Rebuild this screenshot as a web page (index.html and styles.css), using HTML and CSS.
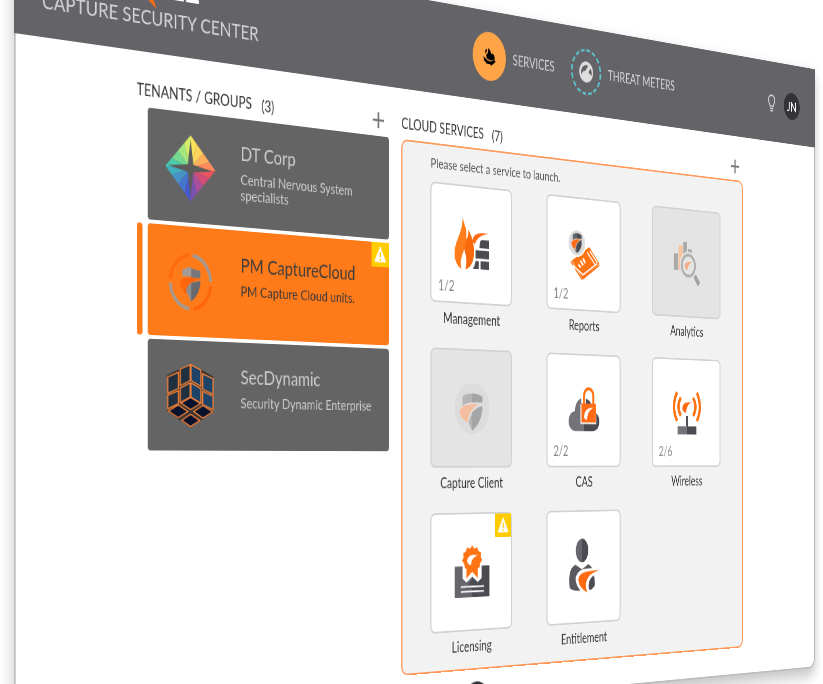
FILE: index.html
```html
<!DOCTYPE html>
<html lang="en">
<head>
<meta charset="utf-8">
<title>Capture Security Center</title>
<link rel="stylesheet" href="styles.css">
</head>
<body>
<svg class="defs" aria-hidden="true">
  <defs>
    <symbol id="warn" viewBox="0 0 28 28">
      <path d="M14 5L23 22H5Z" fill="#fff" stroke="#fff" stroke-linejoin="round"/>
      <path d="M14 11v6M14 19v2" stroke="#fc0" stroke-width="2"/>
    </symbol>
    <symbol id="plus" viewBox="0 0 22 22">
      <path d="M11 1v20M1 11h20" stroke="#777" stroke-width="3"/>
    </symbol>
  </defs>
</svg>
<div class="stage">
  <div class="board">
    <header class="top">
      <div class="brand">
        <div class="wordmark">SONICWALL
          <svg class="swoosh" viewBox="0 0 40 50"><path d="M0 0C20 6 30 28 40 50C26 42 10 24 0 0Z" fill="#ff6a13"/></svg>
        </div>
        <div class="product">CAPTURE SECURITY CENTER</div>
      </div>
      <div class="tools">
        <nav class="nav">
          <a class="nav-item" href="#services">
            <span class="orb orb-on">
              <svg class="orb-icon" viewBox="0 0 32 32"><path d="M14 4C17 6 19 9 20 12C24 10 28 14 27 19C24 22 17 22 10 19L9 14L12 12Z"/><path d="M9 5L11 8L7 13L6 11Z"/><path d="M3 17L12 22L18 23L28 20L29 23L20 29L16 27L10 27L4 22Z"/></svg>
            </span>
            SERVICES
          </a>
          <a class="nav-item" href="#meters">
            <span class="orb">
              <svg class="orb-ring" viewBox="0 0 60 60"><circle cx="30" cy="30" r="28" fill="none" stroke="#5cc4cc" stroke-width="3" stroke-dasharray="7 4"/></svg>
              <svg class="orb-icon orb-gauge" viewBox="0 0 32 32"><circle cx="16" cy="16" r="13" fill="#dedede"/><path d="M6 17C7 10 13 6 20 8L14 15C10 15 8 17 8 20ZM24 11C27 14 27 17 26 20L20 16Z" fill="#646368"/><path d="M24 8L13 19" stroke="#dedede" stroke-width="3"/></svg>
            </span>
            THREAT METERS
          </a>
        </nav>
        <div class="account">
          <button class="bare" type="button" aria-label="Tips">
            <svg class="bulb" viewBox="0 0 20 26"><path d="M6 17C5 13 2 12 2 8.500A8 7.500 0 0 1 18 8.500C18 12 15 13 14 17Z" fill="none" stroke="#ddd" stroke-width="2"/><path d="M6 20.500h8M7 24h6" stroke="#ddd" stroke-width="2"/></svg>
          </button>
          <button class="avatar" type="button">JN</button>
        </div>
      </div>
    </header>

    <main class="content">
      <section class="tenants">
        <div class="heading heading-out">
          <h2>TENANTS / GROUPS</h2><span class="total">(3)</span>
          <button class="bare add" type="button" aria-label="Add tenant"><svg class="plus"><use href="#plus"/></svg></button>
        </div>
        <ul class="tenant-list">
          <li>
            <button class="tenant" type="button">
              <svg class="tenant-logo" viewBox="0 0 72 72">
                <g>
                  <path fill="#f8e45a" d="M36 36V0L45 9Z"/><path fill="#ffd45c" d="M36 36L45 9L54 18Z"/><path fill="#ffb05c" d="M36 36L54 18L63 27Z"/><path fill="#ff8a5c" d="M36 36L63 27L72 36Z"/>
                  <path fill="#ea5560" d="M36 36H72L63 45Z"/><path fill="#d24c74" d="M36 36L63 45L54 54Z"/><path fill="#a8509c" d="M36 36L54 54L45 63Z"/><path fill="#7a50b0" d="M36 36L45 63L36 72Z"/>
                  <path fill="#4858cc" d="M36 36V72L27 63Z"/><path fill="#4474cc" d="M36 36L27 63L18 54Z"/><path fill="#4692c4" d="M36 36L18 54L9 45Z"/><path fill="#40aebc" d="M36 36L9 45L0 36Z"/>
                  <path fill="#4cc8ac" d="M36 36H0L9 27Z"/><path fill="#74d890" d="M36 36L9 27L18 18Z"/><path fill="#a4e680" d="M36 36L18 18L27 9Z"/><path fill="#d4ee68" d="M36 36L27 9L36 0Z"/>
                </g>
                <path fill="#5c5c5a" d="M36 4L40 32L68 37L40 40L36 68L32 40L4 35L32 32Z"/>
              </svg>
              <span class="tenant-text"><span class="tenant-name">DT Corp</span><span class="tenant-note">Central Nervous System specialists</span></span>
            </button>
          </li>
          <li class="current">
            <button class="tenant tenant-on" type="button" aria-current="true">
              <svg class="tenant-logo" viewBox="0 0 72 72">
                <g fill="none" stroke-width="4">
                  <path d="M39 7A29 29 0 0 1 65 34" stroke="#a39a94"/><path d="M65 39A29 29 0 0 1 40 65" stroke="#ff6408"/><path d="M34 65A29 29 0 0 1 7 38" stroke="#a39a94"/><path d="M7 33A29 29 0 0 1 34 7" stroke="#ff6a0c"/>
                </g>
                <path d="M24 23Q36 18 37 20V30H24Z" fill="#a49a98"/><path d="M37 20Q40 22 50 23V31H37Z" fill="#77777c"/>
                <path d="M21 35C30 28 44 31 50 32C38 34 31 40 30 50C24 46 21 40 21 35Z" fill="#ff650c"/>
                <path d="M30 47C30 40 34 36 50 34C50 42 46 50 37 57Z" fill="#8f8e91"/><path d="M37 37L50 34C50 43 46 51 37 57Z" fill="#68686e"/>
              </svg>
              <span class="tenant-text"><span class="tenant-name">PM CaptureCloud</span><span class="tenant-note">PM Capture Cloud units.</span></span>
              <svg class="flag"><use href="#warn"/></svg>
            </button>
          </li>
          <li>
            <button class="tenant" type="button">
              <svg class="tenant-logo" viewBox="110 420 146 208" preserveAspectRatio="none">
                <path d="M183 422L215 440L250 460V573L183 624L115 573V460L151 440Z" fill="#3a3430"/>
                <g stroke="#f0803a" stroke-width="4" stroke-linejoin="round">
                  <g fill="#20303e"><path d="M117 466L148 450V501L117 517Z"/><path d="M153 440L182 425V475L153 492Z"/><path d="M117 523L148 508V549L117 566Z"/><path d="M153 500L182 482V527L153 546Z"/></g>
                  <g fill="#1d4468"><path d="M184 425L213 441V492L184 475Z"/><path d="M218 452L249 467V517L218 501Z"/><path d="M184 482L213 500V546L184 527Z"/><path d="M218 508L249 523V566L218 550Z"/></g>
                  <g fill="#08122c"><path d="M183 528L212 547L183 567L155 547Z"/><path d="M147 553L175 573L147 593L119 573Z"/><path d="M219 553L248 573L219 593L192 573Z"/><path d="M183 581L210 601L183 621L157 601Z"/></g>
                </g>
              </svg>
              <span class="tenant-text"><span class="tenant-name">SecDynamic</span><span class="tenant-note">Security Dynamic Enterprise</span></span>
            </button>
          </li>
        </ul>
      </section>

      <section class="services" id="services">
        <div class="heading">
          <h2>CLOUD SERVICES</h2><span class="total">(7)</span>
          <button class="bare add" type="button" aria-label="Add service"><svg class="plus"><use href="#plus"/></svg></button>
        </div>
        <div class="panel">
          <p class="hint">Please select a service to launch.</p>
          <ul class="grid">
            <li class="service">
              <button class="tile" type="button" aria-labelledby="s1">
                <svg class="icon" viewBox="0 0 64 64">
                  <path d="M15 0C19 10 24 15 21 26C25 24 26 18 25 14C32 22 36 32 35 42C35 52 29 60 20 62C23 54 22 46 18 38C14 46 10 52 13 62C4 59 0 50 1 42C2 28 15 18 15 0Z" fill="#ff7d1a"/>
                  <path d="M25 14C32 22 36 32 35 42C35 52 29 60 20 62C23 54 22 46 18 38C20 32 22 28 21 26C25 24 26 18 25 14Z" fill="#f96a0c"/>
                  <path d="M32 27C34 18 44 15 62 17C50 18 40 22 37 31Z" fill="#ff6a13"/>
                  <g fill="#4c4b52"><path d="M48 25H62V35H45Q45 28 48 25Z"/><rect x="38" y="38" width="24" height="10"/><path d="M38 51H44V61H33Q37 57 38 51Z"/><rect x="47" y="51" width="15" height="10"/></g>
                </svg>
                <span class="count">1/2</span>
              </button>
              <span class="label" id="s1">Management</span>
            </li>
            <li class="service">
              <button class="tile" type="button" aria-labelledby="s2">
                <svg class="icon" viewBox="0 0 64 64">
                  <path d="M8 41L42 22L62 42L29 63Z" fill="#ff7312"/><path d="M6 42L28 64L62 44" fill="none" stroke="#f96a0c" stroke-width="2"/>
                  <path d="M10 47L30 58L58 42" fill="none" stroke="#fff" stroke-width="2"/><path d="M38 29L54 44M43 27L58 41" stroke="#fff" stroke-width="2"/>
                  <path d="M21 45L25 49M25 40L30 46M30 37L34 43" stroke="#fff" stroke-width="3"/>
                  <circle cx="18" cy="18" r="17" fill="#dcdcdc" stroke="#fff" stroke-width="2"/>
                  <path d="M10 8Q18 3 27 8V20Q25 27 18 31Q12 27 10 20Z" fill="#65656c"/><path d="M18 6Q22 6 27 8V20Q25 27 18 31Z" fill="#4c4b52"/>
                  <path d="M7 18C12 12 20 13 27 13C20 16 15 20 15 27C10 25 7 22 7 18Z" fill="#ff6a13" stroke="#dcdcdc"/>
                </svg>
                <span class="count">1/2</span>
              </button>
              <span class="label" id="s2">Reports</span>
            </li>
            <li class="service">
              <button class="tile tile-off" type="button" aria-labelledby="s3">
                <svg class="icon" viewBox="0 0 64 64">
                  <g fill="#aaa"><rect x="4" y="20" width="9" height="22"/><rect x="24" y="4" width="8" height="18"/><rect x="34" y="13" width="8" height="5"/></g>
                  <rect x="14" y="9" width="9" height="33" fill="#f7c3a0"/>
                  <circle cx="35" cy="35" r="15" fill="#e3e3e3" stroke="#e3e3e3" stroke-width="7"/>
                  <circle cx="35" cy="35" r="14" fill="#e4e4e4" stroke="#b0b0b0" stroke-width="4"/>
                  <path d="M27 36C29 29 36 30 43 30C37 32 34 35 33 41C29 40 27 39 27 36Z" fill="#f5ab83"/>
                  <path d="M46 50L51 46L60 57L55 62Z" fill="#a2a2a2"/>
                </svg>
              </button>
              <span class="label" id="s3">Analytics</span>
            </li>
            <li class="service">
              <button class="tile tile-off" type="button" aria-labelledby="s4">
                <svg class="icon" viewBox="0 0 64 64">
                  <circle cx="32" cy="32" r="31" fill="#dcdcdc"/>
                  <path d="M15 17Q32 11 50 17V25Q30 22 15 29Z" fill="#b4b4b4"/><path d="M32 14Q41 14 50 17V25Q41 24 32 25Z" fill="#a5a5a5"/>
                  <path d="M9 36C16 24 32 27 50 26C36 29 26 36 24 50C14 46 9 42 9 36Z" fill="#f4bd9f" stroke="#e4e4e4"/>
                  <path d="M26 50C28 40 36 32 50 29C50 42 44 52 32 59Z" fill="#b4b4b4"/><path d="M32 37Q40 31 50 29C50 42 44 52 32 59Z" fill="#a5a5a5"/>
                </svg>
              </button>
              <span class="label" id="s4">Capture Client</span>
            </li>
            <li class="service">
              <button class="tile" type="button" aria-labelledby="s5">
                <svg class="icon" viewBox="0 0 64 64">
                  <path d="M14 58C-3 56 -1 34 14 33C15 20 24 15 32 16V58Z" fill="#74737a"/><path d="M32 16C44 17 49 25 49 33C66 34 66 57 50 58H32Z" fill="#4c4b52"/>
                  <path d="M25 24H56V49H25Z" fill="#fff"/><path d="M31 27V15A10 10 0 0 1 51 15V27" fill="none" stroke="#fff" stroke-width="9"/>
                  <path d="M32 26V13A9 9 0 0 1 50 13V26" fill="none" stroke="#ff7312" stroke-width="4"/><rect x="27" y="23" width="28" height="24" fill="#ff6a13"/>
                  <path d="M32 40C33 29 43 28 51 28C44 30 38 34 38 44C34 43 32 42 32 40Z" fill="#fff"/>
                </svg>
                <span class="count">2/2</span>
              </button>
              <span class="label" id="s5">CAS</span>
            </li>
            <li class="service">
              <button class="tile" type="button" aria-labelledby="s6">
                <svg class="icon" viewBox="0 0 64 64">
                  <g fill="none" stroke="#ff7312" stroke-width="5"><path d="M11 5Q-2 24 11 43M19 12Q9 24 19 36"/><path d="M53 5Q66 24 53 43M45 12Q55 24 45 36"/></g>
                  <path d="M22 26C24 17 32 18 42 18C34 20 31 25 30 32C25 31 22 29 22 26Z" fill="#ff6a13"/>
                  <path d="M30 36H34V50H52V61H32V50H30Z" fill="#4c4b52"/><path d="M12 50H32V61H12Z" fill="#74737a"/>
                </svg>
                <span class="count">2/6</span>
              </button>
              <span class="label" id="s6">Wireless</span>
            </li>
            <li class="service">
              <button class="tile" type="button" aria-labelledby="s7">
                <svg class="icon" viewBox="0 0 64 64">
                  <path d="M1 25H32V63H1Z" fill="#65656c"/><path d="M32 25H63V63H32Z" fill="#4c4b52"/>
                  <path d="M15 20H49V40L42 45L32 38L22 45L15 40Z" fill="#fff"/>
                  <path d="M20 52L32 41L44 52Z" fill="#4c4b52"/>
                  <path d="M32 0L36 4L41 2L43 7L48 9L47 14L50 18L46 22L45 27L42 28V40L32 32L22 40V28L19 27L18 22L14 18L17 14L16 9L21 7L23 2L28 4Z" fill="#ff7312"/>
                  <path d="M23 18C26 10 34 11 42 12C35 14 30 17 30 24C26 23 23 21 23 18Z" fill="#fff"/>
                  <path d="M12 50H53M12 56H53" stroke="#fff" stroke-width="2"/>
                </svg>
                <svg class="flag"><use href="#warn"/></svg>
              </button>
              <span class="label" id="s7">Licensing</span>
            </li>
            <li class="service">
              <button class="tile" type="button" aria-labelledby="s8">
                <svg class="icon icon-tall" viewBox="0 0 64 72">
                  <ellipse cx="28" cy="15" rx="12" ry="15" fill="#65656c"/><path d="M28 0A12 15 0 0 1 28 30Z" fill="#4c4b52"/>
                  <path d="M15 33L28 39L40 33C50 36 52 46 52 62Q40 67 28 66Q10 67 4 62C2 46 4 37 15 33Z" fill="#5a5960"/>
                  <path d="M18 50C22 38 44 41 63 41C46 45 34 50 40 71C28 66 18 60 18 50Z" fill="#fff" stroke="#fff" stroke-width="5"/>
                  <path d="M21 51C24 41 44 42 63 41C46 44 30 50 38 69C28 65 20 58 21 51Z" fill="#ff6a13"/>
                  <path d="M41 61Q40 53 52 49L53 60Q48 66 43 66Z" fill="#4c4b52"/>
                </svg>
              </button>
              <span class="label" id="s8">Entitlement</span>
            </li>
          </ul>
        </div>
      </section>
    </main>
    <button class="knob" type="button" aria-label="More"></button>
  </div>
</div>
</body>
</html>
```
FILE: styles.css
```css
* { box-sizing: border-box; }

body {
  margin: 0;
  background: #fff;
  color: #333;
  font-family: Lato, "Open Sans", sans-serif;
  font-size: 16px;
}

h2, p, ul { margin: 0; padding: 0; font-weight: 400; }
ul { list-style: none; }
button { font: inherit; color: inherit; border: 0; padding: 0; cursor: pointer; }
svg { display: block; }
.defs { width: 0; height: 0; position: absolute; }
.bare { background: none; }

/* The board is shown as a tilted sheet; its right side recedes. */
.stage {
  height: 100vh;
  overflow: hidden;
  perspective: 2169px;
  perspective-origin: 14px 460px;
}

.board {
  position: relative;
  width: 164.4vw;
  min-height: 818px;
  margin: -74px 0 0 14px;
  padding-bottom: 34px;
  background: #fff;
  border: 2px solid #bbb;
  border-top: 0;
  border-radius: 0 0 14px 14px;
  box-shadow: 0 10px 20px rgba(0, 0, 0, 0.24);
  transform: rotateY(36deg);
  transform-origin: left top;
}

.top {
  display: grid;
  grid-template-columns: 49fr 50fr;
  height: 107px;
  margin: 0 -2px;
  padding: 0 35px;
  background: #646368;
  color: #d6d6d6;
}

.wordmark {
  position: relative;
  width: max-content;
  padding-top: 16px;
  color: #fff;
  font: 700 35px/40px "Liberation Sans", sans-serif;
}
.swoosh { position: absolute; left: 110px; top: 10px; width: 40px; height: 50px; }
.product { font-size: 22px; line-height: 28px; white-space: nowrap; }

.tools { display: flex; justify-content: space-between; align-items: center; }
.nav { display: flex; gap: 30px; }
.nav-item {
  display: flex;
  align-items: center;
  gap: 12px;
  color: inherit;
  font-size: 17px;
  text-decoration: none;
  white-space: nowrap;
}
.orb { position: relative; display: grid; place-items: center; width: 58px; height: 58px; border-radius: 50%; }
.orb-on { background: #ffa547; }
.orb-ring { position: absolute; inset: 0; }
.orb-icon { width: 26px; height: 26px; }
.orb-gauge { width: 32px; height: 32px; }
.account { display: flex; align-items: center; gap: 18px; padding-top: 4px; }
.bulb { width: 18px; height: 24px; }
.avatar { width: 36px; height: 36px; border-radius: 50%; background: #333236; color: #fff; font-size: 18px; }

.content {
  display: grid;
  grid-template-columns: 357fr 641fr;
  gap: 20px;
  padding: 26px 159px 0 171px;
}

.heading { display: flex; align-items: center; height: 32px; padding-bottom: 4px; }
.heading-out { margin-left: -15px; }
.heading h2 { font-size: 17px; line-height: 24px; white-space: nowrap; }
.total { margin-left: 14px; font-size: 17px; }
.add { margin-left: auto; margin-right: 7px; }
.plus { width: 20px; height: 20px; }

.tenant-list { display: grid; gap: 4px; }
.current { position: relative; }
.current::before {
  content: "";
  position: absolute;
  left: -15px;
  top: 0;
  bottom: 0;
  width: 8px;
  border-radius: 4px;
  background: #ff7a18;
}
.tenant {
  position: relative;
  display: flex;
  align-items: flex-start;
  gap: 36px;
  width: 100%;
  height: 117px;
  padding: 24px 12px 0 24px;
  border-radius: 4px;
  background: #646464;
  color: #ccc;
  text-align: left;
}
.tenant-on { background: #ff7b1a; color: #3d3a3a; }
.tenant-logo { flex: none; width: 70px; height: 70px; }
.tenant-name { display: block; font-size: 22px; line-height: 26px; }
.tenant-note { display: block; max-width: 210px; margin-top: 6px; font-size: 16px; line-height: 17px; }
.flag { position: absolute; right: 0; top: 0; width: 28px; height: 28px; background: #fc0; }

.panel {
  padding: 10px 48px 14px 46px;
  border: 2px solid #ff9a5a;
  border-radius: 10px;
  background: #f2f2f2;
}
.hint { font-size: 16px; line-height: 22px; color: #555; }
.grid { display: grid; grid-template-columns: repeat(3, 1fr); gap: 23px 62px; margin: 11px -2px 0 0; }
.service { display: grid; justify-items: center; }
.tile {
  position: relative;
  display: grid;
  place-items: center;
  width: 100%;
  height: 140px;
  border: 2px solid #d2d2d2;
  border-radius: 8px;
  background: #fff;
}
.tile-off { background: #e4e4e4; }
.icon { width: 62px; height: 62px; }
.icon-tall { height: 70px; }
.count { position: absolute; left: 11px; bottom: 8px; font-size: 17px; line-height: 20px; color: #888; }
.label { margin-top: 6px; font-size: 17px; line-height: 24px; white-space: nowrap; }

.knob {
  position: absolute;
  left: 50%;
  top: 796px;
  width: 44px;
  height: 44px;
  margin-left: -22px;
  border-radius: 50%;
  background: #333236;
}
```
